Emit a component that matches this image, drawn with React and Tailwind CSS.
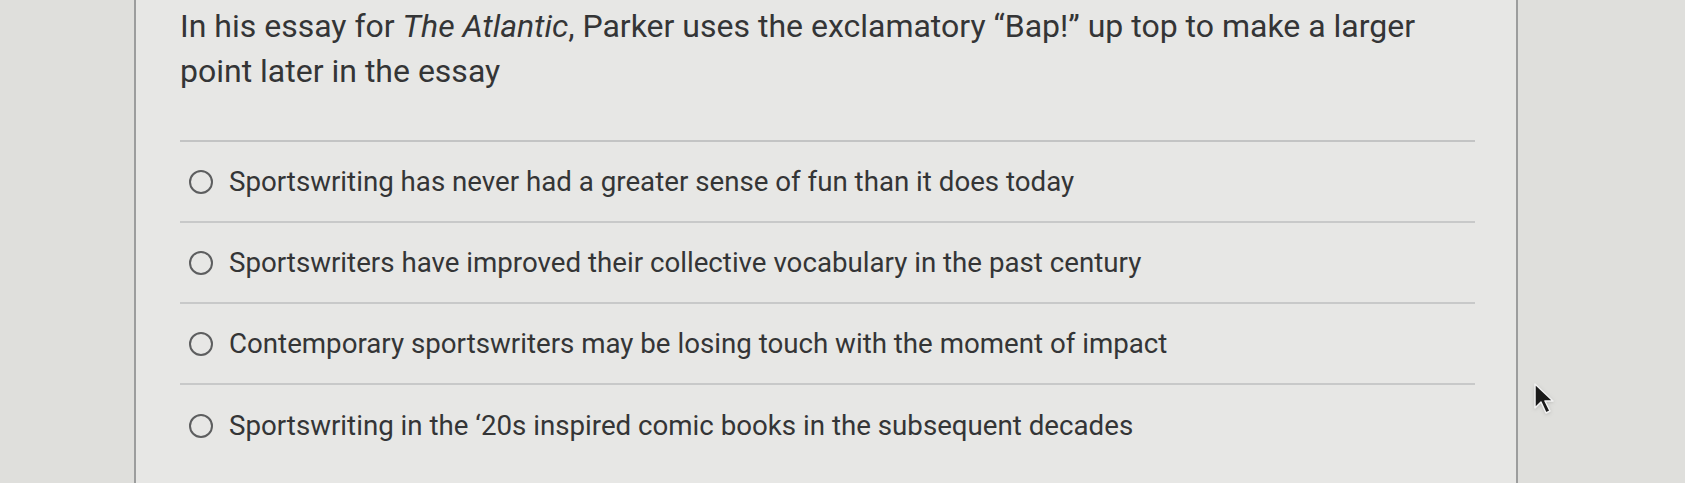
import React from 'react';

const options = [
    'Sportswriting has never had a greater sense of fun than it does today',
    'Sportswriters have improved their collective vocabulary in the past century',
    'Contemporary sportswriters may be losing touch with the moment of impact',
    'Sportswriting in the \u201820s inspired comic books in the subsequent decades',
];

const Cursor = () => (
    <svg width="22" height="34" viewBox="0 0 22 34" className="absolute left-[1533px] top-[382px] drop-shadow">
        <path d="M2 2 L2 26 L8 20 L13 31 L17 29 L12 19 L20 19 Z" fill="#1a1a1a" stroke="#f2f2f2" strokeWidth="1.5" strokeLinejoin="round" />
    </svg>
);

const App = () => {
    return (
        <div className="relative flex h-[483px] w-full overflow-hidden bg-[#dfdfdc] font-['Roboto',sans-serif] text-[#343536]">
            <div className="w-[134px] shrink-0" />
            <div className="w-[1384px] shrink-0 border-x-2 border-[#9c9d9d] bg-[#e7e7e5] pl-[44px] pr-[41px]">
                <h1 className="pt-[4px] text-[32px] leading-[45px]">
                    In his essay for <i>The Atlantic</i>, Parker uses the exclamatory &ldquo;Bap!&rdquo; up top to make a larger
                    <br />
                    point later in the essay
                </h1>
                <div className="mt-[46px] border-t-2 border-[#c3c4c4]">
                    {options.map((text) => (
                        <label key={text} className="flex h-[81px] items-center border-b-2 border-[#c8c9c9] last:border-b-0">
                            <span className="ml-[9px] mr-[16px] h-[24px] w-[24px] shrink-0 rounded-full border-2 border-[#5d5e5f]" />
                            <span className="text-[27.7px] leading-none">{text}</span>
                        </label>
                    ))}
                </div>
            </div>
            <div className="flex-1" />
            <Cursor />
        </div>
    );
};

export default App;
